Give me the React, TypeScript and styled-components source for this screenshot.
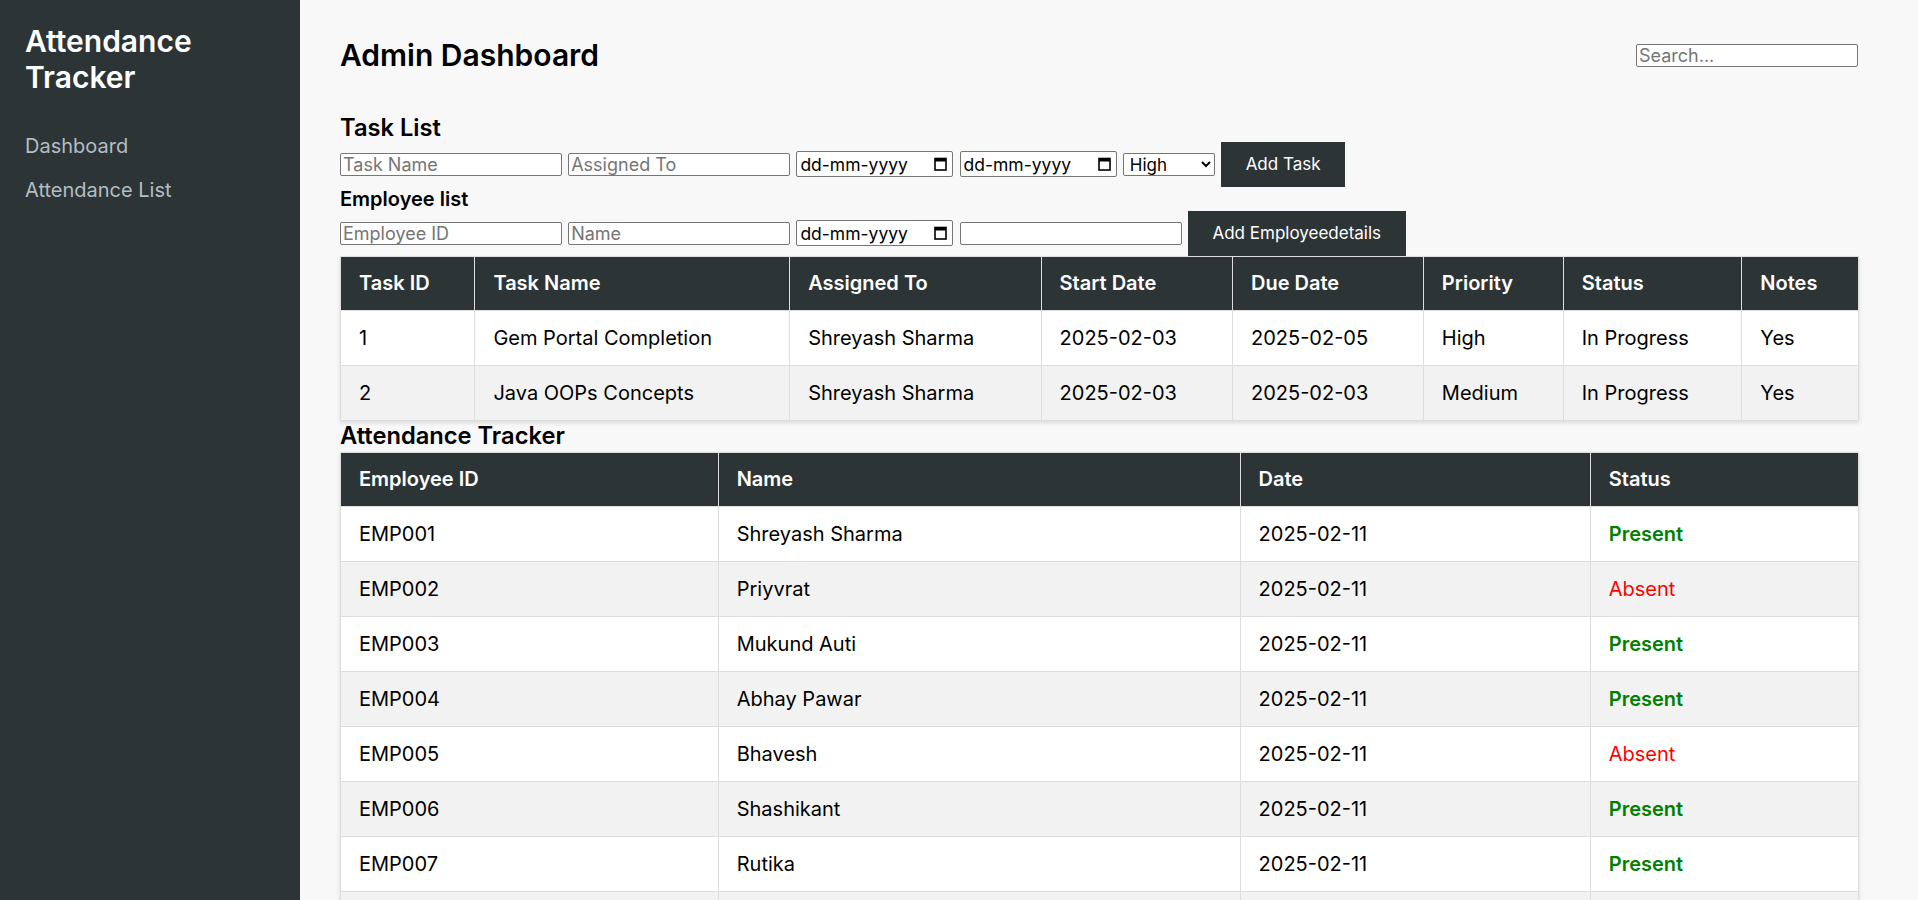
import React from "react";
import styled, { createGlobalStyle } from "styled-components";

const GlobalStyle = createGlobalStyle`
  html, body { margin: 0; padding: 0; }
  body {
    font-family: Inter, "Noto Sans", sans-serif;
    background: #f8f8f8;
    color: #000;
  }
  * { box-sizing: border-box; }
`;

const Layout = styled.div`
  display: flex;
  min-height: 100vh;
`;

const Sidebar = styled.aside`
  flex: 0 0 300px;
  width: 300px;
  background: #2d3436;
  color: #fff;
  padding: 23px 25px;
`;

const Brand = styled.h2`
  margin: 0 0 39px;
  font-size: 30px;
  font-weight: 600;
  line-height: 36px;
`;

const Nav = styled.nav`
  display: flex;
  flex-direction: column;
  gap: 20px;
`;

const NavLink = styled.a`
  color: #b2bec3;
  font-size: 20px;
  line-height: 24px;
  text-decoration: none;
`;

const Main = styled.main`
  flex: 1;
  min-width: 0;
  padding: 37px 60px 40px 40px;
`;

const TopBar = styled.header`
  display: flex;
  justify-content: space-between;
  align-items: center;
  margin-bottom: 39.5px;
`;

const PageTitle = styled.h1`
  margin: 0;
  font-size: 30px;
  font-weight: 600;
`;

const SectionTitle = styled.h2`
  margin: 0;
  font-size: 23.7px;
  font-weight: 600;
`;

const TrackerTitle = styled(SectionTitle)`
  margin: 0.6px 0 1.8px;
`;

const SubTitle = styled.h3`
  margin: 0;
  font-size: 20px;
  font-weight: 600;
`;

const FormRow = styled.div`
  display: flex;
  align-items: center;
  gap: 6.2px;
  height: 45px;
`;

const TextInput = styled.input`
  width: 222px;
  height: 23px;
  border: 1px solid #767676;
  border-radius: 2px;
  padding: 0 2px;
  font-family: Inter, sans-serif;
  font-size: 18px;
  background: #fff;
  color: #000;
  &::placeholder { color: #757575; }
`;

const DateBox = styled.div`
  width: 157px;
  height: 26px;
  border: 1px solid #767676;
  border-radius: 2px;
  background: #fff;
  display: flex;
  align-items: center;
  justify-content: space-between;
  padding: 0 5px 0 3px;
  font-size: 17.5px;
  color: #000;
`;

const Select = styled.select`
  width: 92px;
  height: 23px;
  border: 1px solid #767676;
  border-radius: 2px;
  background: #fff;
  font-family: Inter, sans-serif;
  font-size: 17px;
  color: #000;
  padding: 0 2px;
`;

const Button = styled.button`
  height: 45px;
  background: #2d3436;
  color: #fff;
  border: none;
  padding: 0 24.7px;
  font-family: Inter, sans-serif;
  font-size: 17px;
  cursor: pointer;
`;

const Table = styled.table`
  width: 100%;
  border-collapse: collapse;
  table-layout: fixed;
  background: #fff;
  box-shadow: 0 2px 4px rgba(0, 0, 0, 0.12);
`;

const Col = styled.col<{ $w: number }>`
  width: ${(p) => p.$w}px;
`;

const Th = styled.th`
  background: #2d3436;
  color: #fff;
  font-size: 20px;
  line-height: 23.3px;
  font-weight: 600;
  text-align: left;
  padding: 15px 18px;
  border: 1px solid #ddd;
`;

const Row = styled.tr`
  &:nth-child(even) { background: #f2f2f2; }
`;

const Td = styled.td`
  font-size: 20px;
  line-height: 24px;
  padding: 15px 18px;
  border: 1px solid #ddd;
  white-space: nowrap;
`;

const Status = styled.span<{ $present: boolean }>`
  color: ${(p) => (p.$present ? "#008000" : "#ff0000")};
  font-weight: ${(p) => (p.$present ? 600 : 400)};
`;

const CalendarIcon = () => (
  <svg width="13" height="14" viewBox="0 0 13 14" aria-hidden="true">
    <rect x="1" y="1.5" width="11" height="11.5" fill="none" stroke="#000" strokeWidth="1.6" />
    <rect x="1" y="1.5" width="11" height="3" fill="#000" />
  </svg>
);

const DateField = () => (
  <DateBox>
    <span>dd-mm-yyyy</span>
    <CalendarIcon />
  </DateBox>
);

const taskCols = [134.4, 314.8, 251.4, 191.4, 190.9, 139.9, 178.6, 117.1];
const taskHead = ["Task ID", "Task Name", "Assigned To", "Start Date", "Due Date", "Priority", "Status", "Notes"];
const tasks = [
  ["1", "Gem Portal Completion", "Shreyash Sharma", "2025-02-03", "2025-02-05", "High", "In Progress", "Yes"],
  ["2", "Java OOPs Concepts", "Shreyash Sharma", "2025-02-03", "2025-02-03", "Medium", "In Progress", "Yes"],
];

const attCols = [377.7, 521.9, 350.2, 268.4];
const attHead = ["Employee ID", "Name", "Date", "Status"];
const attendance: [string, string, string, boolean][] = [
  ["EMP001", "Shreyash Sharma", "2025-02-11", true],
  ["EMP002", "Priyvrat", "2025-02-11", false],
  ["EMP003", "Mukund Auti", "2025-02-11", true],
  ["EMP004", "Abhay Pawar", "2025-02-11", true],
  ["EMP005", "Bhavesh", "2025-02-11", false],
  ["EMP006", "Shashikant", "2025-02-11", true],
  ["EMP007", "Rutika", "2025-02-11", true],
  ["EMP008", "Sakshi", "2025-02-11", true],
  ["EMP009", "Omkar", "2025-02-11", false],
];

export default function App() {
  return (
    <>
      <GlobalStyle />
      <Layout>
        <Sidebar>
          <Brand>Attendance Tracker</Brand>
          <Nav>
            <NavLink href="#">Dashboard</NavLink>
            <NavLink href="#">Attendance List</NavLink>
          </Nav>
        </Sidebar>
        <Main>
          <TopBar>
            <PageTitle>Admin Dashboard</PageTitle>
            <TextInput placeholder="Search..." />
          </TopBar>

          <SectionTitle>Task List</SectionTitle>
          <FormRow>
            <TextInput placeholder="Task Name" />
            <TextInput placeholder="Assigned To" />
            <DateField />
            <DateField />
            <Select defaultValue="High">
              <option>High</option>
              <option>Medium</option>
              <option>Low</option>
            </Select>
            <Button>Add Task</Button>
          </FormRow>

          <SubTitle>Employee list</SubTitle>
          <FormRow>
            <TextInput placeholder="Employee ID" />
            <TextInput placeholder="Name" />
            <DateField />
            <TextInput />
            <Button>Add Employeedetails</Button>
          </FormRow>

          <Table>
            <colgroup>
              {taskCols.map((w, i) => (
                <Col key={i} $w={w} />
              ))}
            </colgroup>
            <thead>
              <tr>
                {taskHead.map((h) => (
                  <Th key={h}>{h}</Th>
                ))}
              </tr>
            </thead>
            <tbody>
              {tasks.map((r) => (
                <Row key={r[0]}>
                  {r.map((c, i) => (
                    <Td key={i}>{c}</Td>
                  ))}
                </Row>
              ))}
            </tbody>
          </Table>

          <TrackerTitle>Attendance Tracker</TrackerTitle>
          <Table>
            <colgroup>
              {attCols.map((w, i) => (
                <Col key={i} $w={w} />
              ))}
            </colgroup>
            <thead>
              <tr>
                {attHead.map((h) => (
                  <Th key={h}>{h}</Th>
                ))}
              </tr>
            </thead>
            <tbody>
              {attendance.map(([id, name, date, present]) => (
                <Row key={id}>
                  <Td>{id}</Td>
                  <Td>{name}</Td>
                  <Td>{date}</Td>
                  <Td>
                    <Status $present={present}>{present ? "Present" : "Absent"}</Status>
                  </Td>
                </Row>
              ))}
            </tbody>
          </Table>
        </Main>
      </Layout>
    </>
  );
}
